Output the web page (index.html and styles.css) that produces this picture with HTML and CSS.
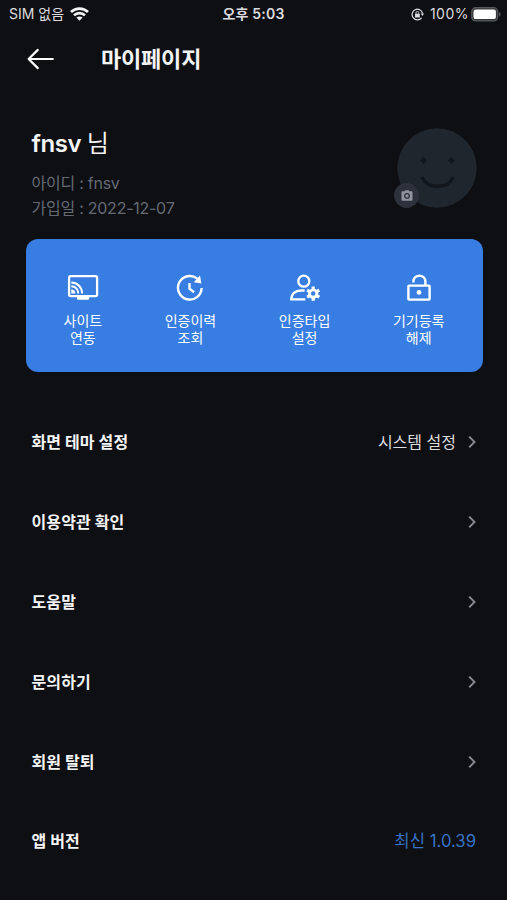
FILE: index.html
```html
<!DOCTYPE html>
<html lang="ko">
<head>
    <meta charset="UTF-8">
    <meta name="viewport" content="width=device-width, initial-scale=1.0">
    <title>마이페이지</title>
    <link rel="stylesheet" href="styles.css">
</head>
<body>
    <div class="status-bar">
        <div class="status-left">
            <span>SIM 없음</span>
            <svg class="wifi" width="19" height="14" viewBox="0 0 19 14">
                <g fill="none" stroke="#f4f4f5" stroke-width="2.7">
                    <path d="M1 5C5.7 .4 13.3 .4 18 5"/>
                    <path d="M4 8.4c3-3 8-3 11 0"/>
                </g>
                <path d="M6.4 10.6c1.8-1.6 4.4-1.6 6.2 0L9.5 13.7z" fill="#f4f4f5"/>
            </svg>
        </div>
        <div class="status-time">오후 5:03</div>
        <div class="status-right">
            <svg class="rotation-lock" width="13" height="13" viewBox="0 0 13 13">
                <path d="M10.6 9.8A5.3 5.3 0 1 1 11.6 5.4" fill="none" stroke="#dcdcde" stroke-width="1.2"/>
                <path d="M9.7 5.4h3.3l-1.5 2.5z" fill="#dcdcde"/>
                <rect x="4" y="5.8" width="4.8" height="3.7" rx=".5" fill="#dcdcde"/>
                <path d="M5 6V4.8a1.4 1.4 0 0 1 2.8 0V6" fill="none" stroke="#dcdcde" stroke-width=".9"/>
            </svg>
            <span class="battery-text">100%</span>
            <svg width="30" height="15" viewBox="0 0 30 15">
                <rect x=".7" y=".7" width="26" height="13.2" rx="4" fill="#38383b" stroke="#59595d" stroke-width="1.2"/>
                <rect x="2.5" y="2.5" width="22.4" height="9.6" rx="2.2" fill="#fff"/>
                <path d="M28 5.2c2 .7 2 3.6 0 4.3z" fill="#59595d"/>
            </svg>
        </div>
    </div>

    <header class="header">
        <svg class="back" width="28" height="22" viewBox="0 0 28 22" fill="none" stroke="#fff" stroke-width="2.2" stroke-linecap="round" stroke-linejoin="round">
            <path d="M25.8 11H1.6M10.8 1.9L1.6 11l9.2 9.1"/>
        </svg>
        <h1>마이페이지</h1>
    </header>

    <section class="profile">
        <div class="profile-info">
            <h2>fnsv <span>님</span></h2>
            <p class="user-id">아이디 : fnsv</p>
            <p class="joined">가입일 : 2022-12-07</p>
        </div>
        <div class="avatar">
            <svg width="80" height="80" viewBox="0 0 80 80">
                <circle cx="40" cy="40" r="39.7" fill="#20262d"/>
                <path d="M26.5 28.8l3.6 3.6-3.6 3.6-3.6-3.6zM54.5 28.8l3.6 3.6-3.6 3.6-3.6-3.6z" fill="#12171d"/>
                <path d="M24.8 49.2C31 61.3 50.5 61.3 56.2 49.2" fill="none" stroke="#12171d" stroke-width="3.4"/>
            </svg>
            <span class="camera">
                <svg width="12" height="11" viewBox="0 0 12 11">
                    <path d="M3.5 1.3L4.4.2h3.2l.9 1.1h2q1 0 1 1v7.4q0 1-1 1h-9q-1 0-1-1V2.3q0-1 1-1z" fill="#8f949e"/>
                    <circle cx="6" cy="5.9" r="2.3" fill="none" stroke="#2c313b" stroke-width="1.3"/>
                </svg>
            </span>
        </div>
    </section>

    <nav class="quick-menu">
        <a class="quick-item">
            <svg width="32" height="28" viewBox="0 0 32 28" fill="none" stroke="#fff" stroke-width="2.3">
                <rect x="2.1" y="2.1" width="28" height="20" rx="1.6"/>
                <path d="M10 22h12.2v2.5q0 1.2-1.2 1.2h-9.8q-1.2 0-1.2-1.2z" fill="#fff" stroke="none"/>
                <path d="M4.3 12.3a7 7 0 0 1 7 7.2M4.3 8.6a10.8 10.8 0 0 1 10.8 10.9" stroke-width="2"/>
                <path d="M4.3 15.2q4 .4 4 4.3h-4z" fill="#fff" stroke="none"/>
            </svg>
            <span>사이트<br>연동</span>
        </a>
        <a class="quick-item">
            <svg width="32" height="28" viewBox="0 0 32 28" fill="none" stroke="#fff" stroke-width="2.4">
                <path d="M23.2 4.6A11.8 11.8 0 1 0 27.6 14"/>
                <path d="M26 1.6l1.4 7.9-7.6-1.3z" fill="#fff" stroke="none"/>
                <path d="M15.5 8.9v5.7l4.6 3.6"/>
            </svg>
            <span>인증이력<br>조회</span>
        </a>
        <a class="quick-item">
            <svg width="32" height="28" viewBox="0 0 32 28" fill="none" stroke="#fff" stroke-width="2.3">
                <circle cx="14.8" cy="7.2" r="5.5"/>
                <path d="M15.6 16.5H12C6.2 16.5 2.3 19.6 2.3 25.4h14"/>
                <circle cx="24.2" cy="19.6" r="3.7" stroke-width="2.9"/>
                <path d="M24.2 12.5v3.2M24.2 23.5v3.2M18.1 16.1l2.8 1.6M27.5 21.5l2.8 1.6M18.1 23.1l2.8-1.6M27.5 17.7l2.8-1.6" stroke-width="3.2"/>
            </svg>
            <span>인증타입<br>설정</span>
        </a>
        <a class="quick-item">
            <svg width="32" height="28" viewBox="0 0 32 28" fill="none" stroke="#fff" stroke-width="2.4">
                <rect x="5.4" y="11.6" width="21.2" height="14" rx=".6"/>
                <path d="M10.4 8.6V7.7c0-8 12-8 12 0v4"/>
                <circle cx="16" cy="18.4" r="2.4" fill="#fff" stroke="none"/>
            </svg>
            <span>기기등록<br>해제</span>
        </a>
    </nav>

    <ul class="settings">
        <li>
            <span class="label">화면 테마 설정</span>
            <span class="value">시스템 설정</span>
            <svg class="chevron" width="8" height="14" viewBox="0 0 8 14"><path d="M1.2 1.6L6.5 7l-5.3 5.4"/></svg>
        </li>
        <li>
            <span class="label">이용약관 확인</span>
            <svg class="chevron" width="8" height="14" viewBox="0 0 8 14"><path d="M1.2 1.6L6.5 7l-5.3 5.4"/></svg>
        </li>
        <li>
            <span class="label">도움말</span>
            <svg class="chevron" width="8" height="14" viewBox="0 0 8 14"><path d="M1.2 1.6L6.5 7l-5.3 5.4"/></svg>
        </li>
        <li>
            <span class="label">문의하기</span>
            <svg class="chevron" width="8" height="14" viewBox="0 0 8 14"><path d="M1.2 1.6L6.5 7l-5.3 5.4"/></svg>
        </li>
        <li>
            <span class="label">회원 탈퇴</span>
            <svg class="chevron" width="8" height="14" viewBox="0 0 8 14"><path d="M1.2 1.6L6.5 7l-5.3 5.4"/></svg>
        </li>
        <li>
            <span class="label">앱 버전</span>
            <span class="value version">최신 1.0.39</span>
        </li>
    </ul>
</body>
</html>
```
FILE: styles.css
```css
* {
    margin: 0;
    padding: 0;
    box-sizing: border-box;
}

body {
    font-family: Inter, 'Noto Sans CJK KR', sans-serif;
    background: #0d0f13;
    color: #f4f4f5;
    height: 900px;
    overflow: hidden;
}

svg {
    display: block;
    flex-shrink: 0;
}

/* Status bar */
.status-bar {
    display: grid;
    grid-template-columns: 1fr auto 1fr;
    align-items: center;
    height: 28px;
    padding: 0 6px 0 9px;
    font-size: 14px;
    line-height: 20px;
    color: #dcdcde;
}

.status-left,
.status-right {
    display: flex;
    align-items: center;
}

.status-left {
    gap: 6px;
}

.status-time {
    margin-right: 3px;
    font-weight: 600;
    letter-spacing: 0.2px;
}

.status-right {
    justify-content: flex-end;
}

.battery-text {
    margin: 0 2px 0 6px;
    letter-spacing: 0.5px;
}

/* Header */
.header {
    display: flex;
    align-items: center;
    gap: 46px;
    height: 62px;
    padding-left: 27px;
}

.header h1 {
    font-size: 22px;
    font-weight: 700;
    line-height: 30px;
    letter-spacing: -0.2px;
}

/* Profile */
.profile {
    display: flex;
    justify-content: space-between;
    height: 149px;
    padding: 38px 30px 0 31.5px;
}

.profile h2 {
    font-size: 24px;
    font-weight: 600;
    line-height: 32px;
    letter-spacing: -0.4px;
}

.profile h2 span {
    font-weight: 400;
}

.profile p {
    font-size: 16px;
    line-height: 25px;
    letter-spacing: -0.25px;
    color: #656a73;
}

.profile .user-id {
    margin-top: 11px;
}

.avatar {
    position: relative;
    width: 80px;
    height: 80px;
}

.camera {
    position: absolute;
    left: -3px;
    bottom: 0;
    display: flex;
    align-items: center;
    justify-content: center;
    width: 25px;
    height: 25px;
    border-radius: 50%;
    background: #2c313b;
}

/* Quick menu */
.quick-menu {
    display: flex;
    justify-content: space-between;
    height: 133px;
    margin: 0 24.5px 0 25.5px;
    padding: 35px 38px 0;
    border-radius: 12px;
    background: #387de2;
}

.quick-item {
    display: flex;
    flex-direction: column;
    align-items: center;
    gap: 10px;
    font-size: 14px;
    line-height: 17px;
    text-align: center;
    color: #fff;
}

/* Settings list */
.settings {
    padding-top: 30px;
    list-style: none;
}

.settings li {
    display: flex;
    align-items: center;
    height: 79.9px;
    padding: 0 31px 0 31.5px;
    font-size: 16px;
    line-height: 24px;
}

.label {
    flex: 1;
    font-weight: 700;
    letter-spacing: 0.1px;
}

.value {
    margin-right: 12px;
    color: #dcdcde;
}

.version {
    margin-right: 0;
    font-size: 16.7px;
    color: #3873c4;
}

.chevron {
    fill: none;
    stroke: #85888e;
    stroke-width: 2;
}
```
